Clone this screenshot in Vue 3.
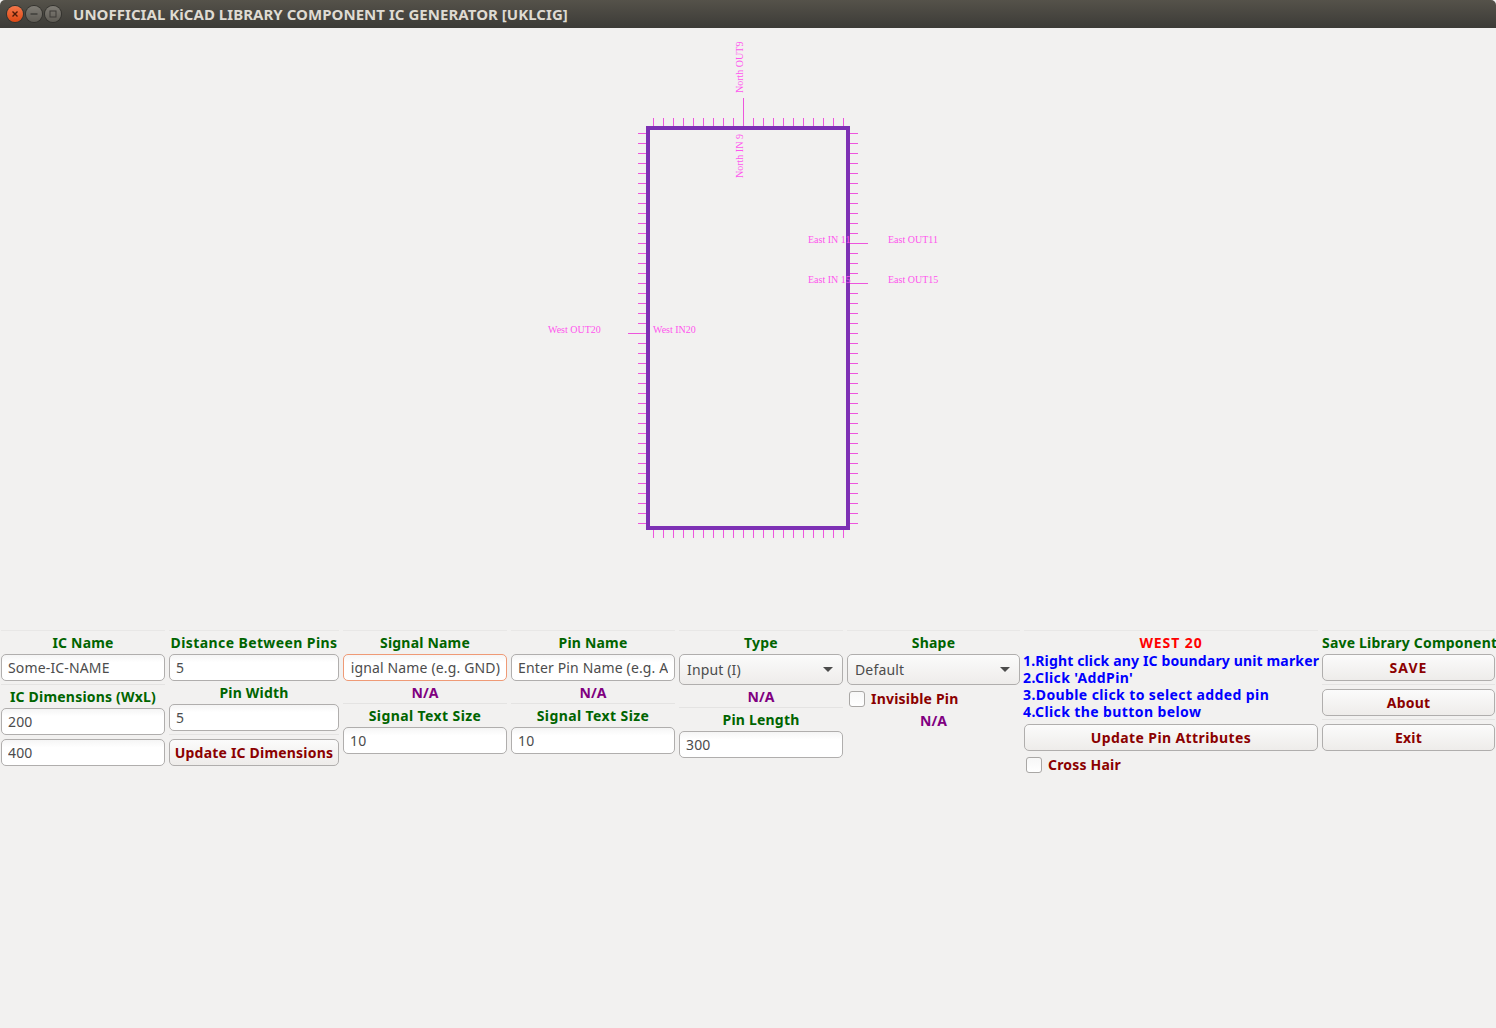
<template>
  <div class="window">
    <header class="titlebar">
      <div class="win-buttons">
        <span class="win-btn close">
          <svg width="8" height="8" viewBox="0 0 8 8"><path d="M1.5 1.5l5 5M6.5 1.5l-5 5" stroke="#4d1a08" stroke-width="1.4" /></svg>
        </span>
        <span class="win-btn">
          <svg width="8" height="8" viewBox="0 0 8 8"><path d="M0.5 4h7" stroke="#3c3b37" stroke-width="1.4" /></svg>
        </span>
        <span class="win-btn">
          <svg width="8" height="8" viewBox="0 0 8 8"><rect x="1" y="1" width="6" height="6" fill="none" stroke="#3c3b37" /></svg>
        </span>
      </div>
      <span class="title">UNOFFICIAL KiCAD LIBRARY COMPONENT IC GENERATOR [UKLCIG]</span>
    </header>

    <!-- IC drawing canvas -->
    <svg class="canvas" width="1496" height="602" viewBox="0 28 1496 602">
      <g stroke="#ee55dd" stroke-width="1">
        <line v-for="x in hTicks" :key="'t' + x" :x1="x + 0.5" y1="118" :x2="x + 0.5" y2="128" />
        <line v-for="x in hTicks" :key="'b' + x" :x1="x + 0.5" y1="528" :x2="x + 0.5" y2="538" />
        <line v-for="y in vTicks" :key="'l' + y" x1="638" :y1="y + 0.5" x2="648" :y2="y + 0.5" />
        <line v-for="y in vTicks" :key="'r' + y" x1="848" :y1="y + 0.5" x2="858" :y2="y + 0.5" />
        <line x1="743.5" y1="98" x2="743.5" y2="128" />
        <line x1="848" y1="243.5" x2="868" y2="243.5" />
        <line x1="848" y1="283.5" x2="868" y2="283.5" />
        <line x1="628" y1="333.5" x2="648" y2="333.5" />
      </g>
      <rect x="648" y="128" width="200" height="400" fill="none" stroke="#7d30b4" stroke-width="4" />
      <g class="pin-text">
        <text x="808" y="243">East IN 11</text>
        <text x="888" y="243">East OUT11</text>
        <text x="808" y="283">East IN 15</text>
        <text x="888" y="283">East OUT15</text>
        <text x="548" y="333">West OUT20</text>
        <text x="653" y="333">West IN20</text>
        <text transform="translate(743 93) rotate(-90)">North OUT9</text>
        <text transform="translate(743 178) rotate(-90)">North IN 9</text>
      </g>
    </svg>

    <section class="panel">
      <div class="col col-1">
        <label class="head">IC Name</label>
        <input class="field" value="Some-IC-NAME" readonly />
        <hr />
        <label class="head">IC Dimensions (WxL)</label>
        <input class="field" value="200" readonly />
        <input class="field next" value="400" readonly />
      </div>

      <div class="col col-2">
        <label class="head wide">Distance Between Pins</label>
        <input class="field" value="5" readonly />
        <label class="head spaced">Pin Width</label>
        <input class="field" value="5" readonly />
        <hr />
        <button class="btn">Update IC Dimensions</button>
      </div>

      <div class="col col-3">
        <label class="head">Signal Name</label>
        <input class="field focused" value="ignal Name (e.g. GND)" readonly />
        <span class="na">N/A</span>
        <hr />
        <label class="head wide">Signal Text Size</label>
        <input class="field" value="10" readonly />
      </div>

      <div class="col col-3">
        <label class="head">Pin Name</label>
        <input class="field" value="Enter Pin Name (e.g. A1)" readonly />
        <span class="na">N/A</span>
        <hr />
        <label class="head wide">Signal Text Size</label>
        <input class="field" value="10" readonly />
      </div>

      <div class="col col-3">
        <label class="head">Type</label>
        <div class="combo">Input (I)<i class="caret"></i></div>
        <span class="na">N/A</span>
        <hr />
        <label class="head">Pin Length</label>
        <input class="field" value="300" readonly />
      </div>

      <div class="col col-6">
        <label class="head">Shape</label>
        <div class="combo">Default<i class="caret"></i></div>
        <label class="check"><i class="box"></i>Invisible Pin</label>
        <span class="na low">N/A</span>
      </div>

      <div class="col col-7">
        <label class="head west">WEST 20</label>
        <ol class="steps">
          <li v-for="step in steps" :key="step">{{ step }}</li>
        </ol>
        <button class="btn wide-btn">Update Pin Attributes</button>
        <label class="check"><i class="box"></i>Cross Hair</label>
      </div>

      <div class="col col-8">
        <label class="head">Save Library Component</label>
        <button class="btn save">SAVE</button>
        <hr />
        <button class="btn">About</button>
        <hr />
        <button class="btn">Exit</button>
      </div>
    </section>
  </div>
</template>

<script setup>
const hTicks = Array.from({ length: 20 }, (_, i) => 653 + i * 10);
const vTicks = Array.from({ length: 40 }, (_, i) => 133 + i * 10);

const steps = [
  "1.Right click any IC boundary unit marker",
  "2.Click 'AddPin'",
  "3.Double click to select added pin",
  "4.Click the button below",
];
</script>

<style>
body {
  margin: 0;
  background: #f2f1f0;
}
</style>

<style scoped>
.window {
  width: 1496px;
  height: 1028px;
  overflow: hidden;
  background: #f2f1f0;
  font-family: "Noto Sans", "Open Sans", sans-serif;
  font-size: 14px;
}

.titlebar {
  height: 28px;
  display: flex;
  align-items: center;
  background: linear-gradient(#55524a, #3c3b37);
  border-radius: 5px 5px 0 0;
  box-sizing: border-box;
  padding-left: 7px;
}

.win-buttons {
  display: flex;
  gap: 3px;
  width: 66px;
}

.win-btn {
  width: 16px;
  height: 16px;
  border-radius: 50%;
  display: flex;
  align-items: center;
  justify-content: center;
  background: linear-gradient(#7f7c75, #5f5c55);
  box-shadow: 0 0 0 1px #33322e;
}

.win-btn.close {
  background: linear-gradient(#f5774a, #dd4814);
}

.title {
  color: #dfdbd2;
  font-weight: 700;
  font-size: 15px;
  letter-spacing: 0.04px;
}

.canvas {
  display: block;
}

.pin-text {
  font-family: "Liberation Serif", serif;
  font-size: 10px;
  fill: #ff55ee;
}

.panel {
  display: flex;
  align-items: flex-start;
  padding-left: 1px;
}

.col {
  display: flex;
  flex-direction: column;
  align-items: stretch;
  border-top: 1px solid #e8e7e6;
  box-sizing: border-box;
  padding-top: 4px;
  margin-right: 4px;
}

.col-1,
.col-3 {
  width: 164px;
}

.col-2 {
  width: 170px;
}

.col-6 {
  width: 173px;
}

.col-7 {
  width: 294px;
}

.col-8 {
  width: 173px;
  margin-right: 0;
}

.head {
  height: 16px;
  line-height: 16px;
  margin-bottom: 3px;
  font-weight: 700;
  letter-spacing: 0.2px;
  text-align: center;
  white-space: nowrap;
  color: #006400;
}

.wide {
  letter-spacing: 0.4px;
}

.spaced {
  margin-top: 4px;
}

.west {
  color: #ff0000;
  letter-spacing: 0.9px;
}

.field,
.btn,
.combo {
  box-sizing: border-box;
  height: 27px;
  margin: 0;
  font-family: inherit;
  font-size: 14px;
  letter-spacing: 0.15px;
  border: 1px solid #b0aead;
  border-radius: 5px;
  flex: none;
}

.field {
  width: 100%;
  padding: 0 6px;
  color: #4c4c4c;
  background: linear-gradient(#f5f5f5, #ffffff 30%);
  outline: none;
}

.next {
  margin-top: 4px;
}

.focused {
  border-color: #ef9a76;
  text-align: right;
}

.btn {
  width: 100%;
  padding: 0;
  font-weight: 700;
  letter-spacing: 0.2px;
  color: #8b0000;
  background: linear-gradient(#fbfbfb, #eeecea);
}

.wide-btn {
  letter-spacing: 0.4px;
}

.save {
  letter-spacing: 1px;
}

.combo {
  height: 31px;
  display: flex;
  align-items: center;
  justify-content: space-between;
  padding: 0 9px 0 7px;
  color: #4c4c4c;
  background: linear-gradient(#fbfbfb, #eeecea);
}

.caret {
  width: 0;
  height: 0;
  border-left: 5px solid transparent;
  border-right: 5px solid transparent;
  border-top: 5px solid #4c4c4c;
}

hr {
  width: 100%;
  height: 1px;
  margin: 3px 0 4px;
  border: none;
  background: #e4e3e2;
}

.na {
  height: 15px;
  line-height: 16px;
  margin-top: 4px;
  font-weight: 700;
  text-align: center;
  color: #800080;
}

.na.low {
  margin-top: 6px;
}

.steps {
  margin: -2px 0 4px -1px;
  padding: 0;
  list-style: none;
  font-weight: 700;
  letter-spacing: 0.4px;
  color: #0000ff;
  white-space: nowrap;
  line-height: 17px;
}

.steps li:first-child {
  letter-spacing: 0.15px;
}

.check {
  height: 16px;
  line-height: 16px;
  display: flex;
  align-items: center;
  gap: 6px;
  margin: 6px 0 0 2px;
  font-weight: 700;
  letter-spacing: 0.2px;
  color: #8b0000;
}

.box {
  width: 16px;
  height: 16px;
  box-sizing: border-box;
  border: 1px solid #a9a7a5;
  border-radius: 3px;
  background: linear-gradient(#f7f7f7, #fff);
}
</style>
